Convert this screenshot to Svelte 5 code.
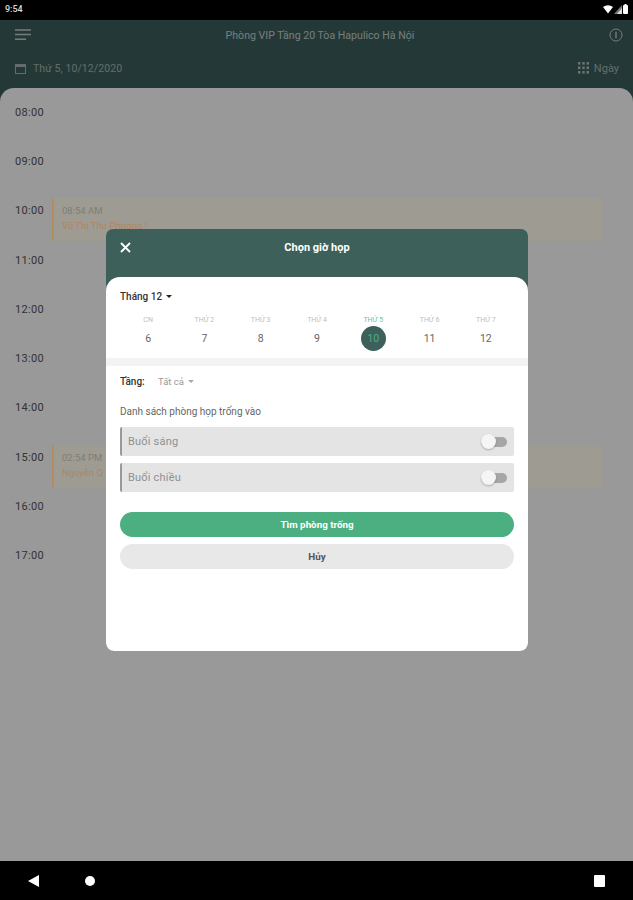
<script lang="ts">
    const hours = ["08:00", "09:00", "10:00", "11:00", "12:00", "13:00", "14:00", "15:00", "16:00", "17:00"];
    const events: Record<string, { time: string; name: string }> = {
        "10:00": { time: "08:54 AM", name: "Vũ Thị Thu Phương !" },
        "15:00": { time: "02:54 PM", name: "Nguyễn Q" },
    };
    const days = [
        { label: "CN", num: 6 },
        { label: "THỨ 2", num: 7 },
        { label: "THỨ 3", num: 8 },
        { label: "THỨ 4", num: 9 },
        { label: "THỨ 5", num: 10, active: true },
        { label: "THỨ 6", num: 11 },
        { label: "THỨ 7", num: 12 },
    ];
    const sessions = ["Buổi sáng", "Buổi chiều"];
</script>

<div class="screen">
    <div class="status">
        <span class="clock">9:54</span>
        <div class="status-icons">
            <svg width="10" height="9" viewBox="0 0 10 9"><path d="M0 2 Q5 -1.4 10 2 L5 8.5Z" fill="#fff" /></svg>
            <svg width="8" height="9" viewBox="0 0 8 9"><path d="M8 0V9H0Z" fill="#777" /><path d="M8 3V9H3Z" fill="#ddd" /></svg>
            <svg width="5" height="10" viewBox="0 0 5 10"><rect y="1" width="5" height="9" rx="1" fill="#fff" /><rect x="1.5" width="2" height="1" fill="#fff" /></svg>
        </div>
    </div>

    <main class="app">
        <header class="topbar">
            <div class="title-row">
                <svg class="menu" width="16" height="12" viewBox="0 0 16 12">
                    <path d="M0 1H16M0 5.5H16M0 10.2H11" stroke="#c4d0cd" stroke-width="1.6" />
                </svg>
                <span class="title">Phòng VIP Tầng 20 Tòa Hapulico Hà Nội</span>
                <svg class="info" width="14" height="14" viewBox="0 0 14 14">
                    <circle cx="7" cy="7" r="6" fill="none" stroke="#c4d0cd" stroke-width="1" />
                    <path d="M7 3.8V10.2" stroke="#c4d0cd" stroke-width="1.4" />
                </svg>
            </div>
            <div class="date-row">
                <svg width="11" height="11" viewBox="0 0 11 11">
                    <rect x="0.5" y="1.5" width="10" height="9" fill="none" stroke="#a8b5b2" />
                    <path d="M0.5 3H10.5" stroke="#a8b5b2" stroke-width="2" />
                </svg>
                <span class="date">Thứ 5, 10/12/2020</span>
                <svg class="grid-icon" width="11" height="12" viewBox="0 0 11 12">
                    {#each [0, 4.3, 8.6] as x}
                        {#each [0, 4.5, 9] as y}
                            <rect x={x} y={y} width="2.4" height="2.6" fill="#b4c0bd" />
                        {/each}
                    {/each}
                </svg>
                <span class="view">Ngày</span>
            </div>
        </header>

        <section class="sheet">
            {#each hours as hour}
                <div class="hour">
                    <span class="hour-label">{hour}</span>
                    {#if events[hour]}
                        <div class="event">
                            <span class="event-time">{events[hour].time}</span>
                            <span class="event-name">{events[hour].name}</span>
                        </div>
                    {/if}
                </div>
            {/each}
        </section>

        <div class="overlay"></div>

        <div class="modal" role="dialog">
            <div class="modal-header">
                <svg class="close" width="11" height="11" viewBox="0 0 11 11">
                    <path d="M1 1L10 10M10 1L1 10" stroke="#fff" stroke-width="1.8" />
                </svg>
                <h1>Chọn giờ họp</h1>
            </div>
            <div class="card">
                <div class="month">Tháng 12 <i class="caret"></i></div>
                <div class="week">
                    {#each days as day}
                        <div class="day" class:active={day.active}>
                            <span class="day-label">{day.label}</span>
                            <span class="day-num">{day.num}</span>
                        </div>
                    {/each}
                </div>
                <div class="divider"></div>
                <div class="body">
                    <div class="floor">
                        <b>Tầng:</b>
                        <span>Tất cả</span>
                        <i class="caret light"></i>
                    </div>
                    <p class="hint">Danh sách phòng họp trống vào</p>
                    <div class="sessions">
                        {#each sessions as session}
                            <div class="session">
                                <span>{session}</span>
                                <span class="toggle"><i></i></span>
                            </div>
                        {/each}
                    </div>
                    <button type="button" class="btn primary">Tìm phòng trống</button>
                    <button type="button" class="btn ghost">Hủy</button>
                </div>
            </div>
        </div>
    </main>

    <div class="nav">
        <svg class="back" width="11" height="12" viewBox="0 0 11 12"><path d="M11 0V12L0 6Z" fill="#fff" /></svg>
        <i class="home"></i>
        <i class="recent"></i>
    </div>
</div>

<style>
    :global(body) {
        background: #000;
    }

    .screen {
        width: 633px;
        height: 900px;
        display: flex;
        flex-direction: column;
        overflow: hidden;
        font-family: Roboto, "Liberation Sans", sans-serif;
    }

    .status {
        height: 20px;
        flex: none;
        background: #000;
        color: #ddd;
        display: flex;
        align-items: center;
        justify-content: space-between;
        padding: 0 5px 2px 5px;
        box-sizing: border-box;
        font-size: 9px;
        font-weight: 500;
    }

    .status-icons {
        display: flex;
        align-items: center;
        gap: 1px;
    }

    .app {
        position: relative;
        flex: 1;
        display: flex;
        flex-direction: column;
        background: #3d605d;
        min-height: 0;
    }

    .topbar {
        height: 67.5px;
        flex: none;
        padding: 0 10px 0 15px;
        box-sizing: border-box;
    }

    .title-row {
        height: 30px;
        display: flex;
        align-items: center;
        justify-content: space-between;
    }

    .title {
        font-size: 10.6px;
        color: #c4d2cf;
    }

    .date-row {
        height: 36px;
        display: flex;
        align-items: center;
        font-size: 10.5px;
    }

    .date {
        margin-left: 7px;
        color: #a8b5b2;
        letter-spacing: 0.1px;
    }

    .grid-icon {
        margin-left: auto;
        margin-right: 5px;
    }

    .view {
        color: #a8b5b2;
        font-size: 11px;
        margin-right: 4px;
    }

    .sheet {
        flex: 1;
        background: #fff;
        border-radius: 14px 14px 0 0;
        min-height: 0;
    }

    .hour {
        position: relative;
        height: 49.3px;
        padding-left: 15px;
        display: flex;
        align-items: center;
        box-sizing: border-box;
        font-size: 11px;
        color: #555;
    }

    .hour-label {
        letter-spacing: 0.3px;
    }

    /* stays above the overlay: these tints are lighter than a plain dimmed white */
    .event {
        position: absolute;
        left: 52px;
        right: 30px;
        top: 12px;
        height: 43px;
        box-sizing: border-box;
        padding: 7px 0 0 8px;
        border-left: 2px solid #b58c60;
        border-radius: 2px;
        background: #9e9c92;
        display: flex;
        flex-direction: column;
        gap: 4px;
        font-size: 9.5px;
        z-index: 3;
    }

    .event-time {
        color: #7f7d74;
    }

    .event-name {
        color: #b08560;
    }

    .overlay {
        position: absolute;
        inset: 0;
        z-index: 2;
        background: rgba(0, 0, 0, 0.4);
    }

    .modal {
        position: absolute;
        z-index: 4;
        left: 106px;
        top: 209px;
        width: 422px;
        height: 422px;
        display: flex;
        flex-direction: column;
        background: #3d615a;
        border-radius: 7px 7px 8px 8px;
    }

    .modal-header {
        position: relative;
        height: 48px;
        flex: none;
        display: flex;
        align-items: flex-start;
        justify-content: center;
        padding-top: 12px;
        box-sizing: border-box;
    }

    .close {
        position: absolute;
        left: 14px;
        top: 13px;
    }

    h1 {
        margin: 0;
        font-size: 11px;
        line-height: 13px;
        font-weight: 700;
        color: #fff;
    }

    .card {
        flex: 1;
        background: #fff;
        border-radius: 14px 14px 8px 8px;
        display: flex;
        flex-direction: column;
    }

    .month {
        padding: 14px 14px 0;
        height: 32px;
        box-sizing: border-box;
        font-size: 10px;
        font-weight: 500;
        color: #333;
        display: flex;
        align-items: flex-start;
        gap: 4px;
    }

    .caret {
        width: 0;
        height: 0;
        border: 3px solid transparent;
        border-top: 3px solid #222;
        border-bottom: 0;
        align-self: center;
        margin-top: -8px;
    }

    .caret.light {
        border-top-color: #aaa;
        margin-top: 0;
    }

    .week {
        display: grid;
        grid-template-columns: repeat(7, 1fr);
        padding: 0 14px;
        height: 49px;
    }

    .day {
        display: flex;
        flex-direction: column;
        align-items: center;
    }

    .day-label {
        font-size: 7px;
        color: #bdbdbd;
        height: 12px;
        display: flex;
        align-items: center;
        margin-top: 5px;
    }

    .day-num {
        width: 25px;
        height: 25px;
        border-radius: 50%;
        display: flex;
        align-items: center;
        justify-content: center;
        font-size: 10.5px;
        color: #666;
    }

    .day.active .day-label {
        color: #6fbf9b;
    }

    .day.active .day-num {
        background: #3d615a;
        color: #4caf82;
    }

    .divider {
        height: 8px;
        flex: none;
        background: #f3f3f3;
    }

    .body {
        padding: 0 14px;
        display: flex;
        flex-direction: column;
    }

    .floor {
        height: 31px;
        display: flex;
        align-items: center;
        font-size: 9.5px;
        color: #999;
    }

    .floor b {
        color: #333;
        font-weight: 500;
        width: 38px;
        font-size: 10px;
    }

    .floor .caret {
        margin-left: 4px;
    }

    .hint {
        margin: 0 0 2px;
        height: 28px;
        display: flex;
        align-items: center;
        font-size: 10px;
        color: #666;
    }

    .sessions {
        display: flex;
        flex-direction: column;
        gap: 7px;
    }

    .session {
        height: 29px;
        box-sizing: border-box;
        border-left: 2px solid #999;
        border-radius: 2px;
        background: #e4e4e4;
        padding: 0 7px 0 6px;
        display: flex;
        align-items: center;
        justify-content: space-between;
        font-size: 11px;
        color: #909090;
        letter-spacing: 0.2px;
    }

    .toggle {
        position: relative;
        width: 26px;
        height: 10px;
        border-radius: 5px;
        background: #a6a6a6;
    }

    .toggle i {
        position: absolute;
        left: 0;
        top: -3px;
        width: 15px;
        height: 15px;
        border-radius: 50%;
        background: #f5f5f5;
        box-shadow: 0 1px 2px rgba(0, 0, 0, 0.25);
    }

    .btn {
        height: 25px;
        flex: none;
        border: 0;
        border-radius: 13px;
        padding: 0;
        font: inherit;
        font-size: 9.8px;
        font-weight: 700;
    }

    .primary {
        margin-top: 20px;
        background: #4caf82;
        color: #fff;
    }

    .ghost {
        margin-top: 7px;
        background: #e8e8e8;
        color: #555;
    }

    .nav {
        height: 39px;
        flex: none;
        background: #000;
        display: flex;
        align-items: center;
        position: relative;
        padding-left: 28px;
    }

    .home {
        width: 10px;
        height: 10px;
        margin-left: 46px;
        border-radius: 50%;
        background: #fff;
    }

    .recent {
        width: 11px;
        height: 12px;
        margin-left: auto;
        margin-right: 28px;
        border-radius: 1px;
        background: #fff;
    }
</style>
